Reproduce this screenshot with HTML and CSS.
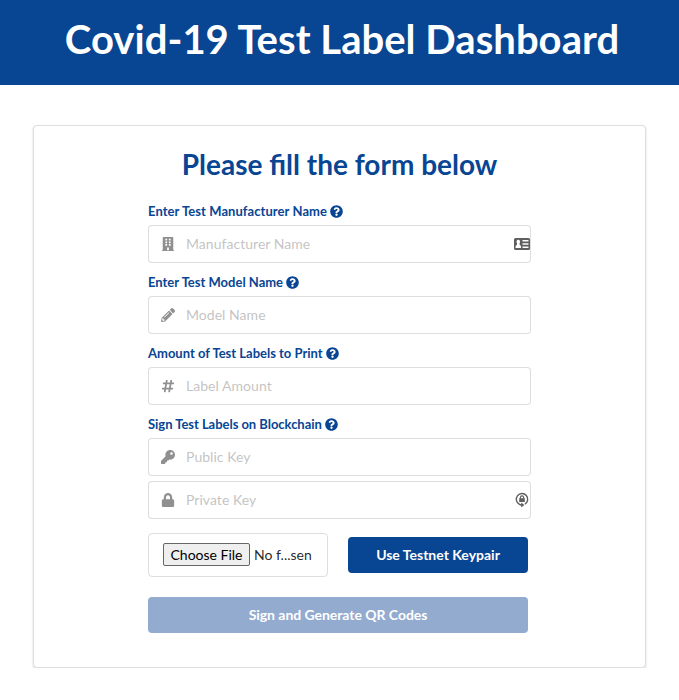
FILE: index.html
```html
<!DOCTYPE html>
<html lang="en">
<head>
<meta charset="utf-8">
<title>Covid-19 Test Label Dashboard</title>
<link rel="stylesheet" href="styles.css">
</head>
<body>
<svg class="sprite" width="0" height="0">
  <symbol id="help" viewBox="0 0 512 512"><path d="M504 256c0 136.997-111.043 248-248 248S8 392.997 8 256C8 119.083 119.043 8 256 8s248 111.083 248 248zM262.655 90c-54.497 0-89.255 22.957-116.549 63.758-3.536 5.286-2.353 12.415 2.715 16.258l34.699 26.31c5.205 3.947 12.621 3.008 16.665-2.122 17.864-22.658 30.113-35.797 57.303-35.797 20.429 0 45.698 13.148 45.698 32.958 0 14.976-12.363 22.667-32.534 33.976C247.128 238.528 216 254.941 216 296v4c0 6.627 5.373 12 12 12h56c6.627 0 12-5.373 12-12v-1.333c0-28.462 83.186-29.647 83.186-106.667 0-58.002-60.165-102-116.531-102zM256 338c-25.365 0-46 20.635-46 46 0 25.364 20.635 46 46 46s46-20.636 46-46c0-25.365-20.635-46-46-46z"/></symbol>
</svg>
<header class="banner"><h1>Covid-19 Test Label Dashboard</h1></header>
<main class="card">
  <h2>Please fill the form below</h2>
  <form class="form">
    <div class="field">
      <label class="maker" for="maker"><span>Enter Test Manufacturer Name</span> <svg class="help"><use href="#help"/></svg></label>
      <div class="input">
        <svg class="icon" viewBox="0 0 448 512"><path fill-rule="evenodd" d="M436 480h-20V24c0-13.255-10.745-24-24-24H56C42.745 0 32 10.745 32 24v456H12c-6.627 0-12 5.373-12 12v20h448v-20c0-6.627-5.373-12-12-12zM128 64h64v64h-64zM256 64h64v64h-64zM128 160h64v64h-64zM256 160h64v64h-64zM128 256h64v64h-64zM256 256h64v64h-64zM192 384h64v96h-64z"/></svg>
        <input id="maker" type="text" placeholder="Manufacturer Name">
        <svg class="autofill contact" viewBox="0 0 16 12"><path fill-rule="evenodd" d="M1.5 0h13A1.500 1.500 0 0 1 16 1.500v9a1.500 1.500 0 0 1-1.500 1.500h-13A1.500 1.500 0 0 1 0 10.500v-9A1.500 1.500 0 0 1 1.500 0zM4.300 1.800a1.800 1.900 0 0 0-1.300 3.200v1.700C1.900 7.100 1.500 8 1.500 10h5.600c0-2-.4-2.900-1.500-3.300V5A1.800 1.900 0 0 0 4.300 1.800zM8.500 2h6v1.500h-6zM8.500 5.200h6v1.500h-6zM8.500 8.400h6v1.500h-6z"/></svg>
      </div>
    </div>
    <div class="field">
      <label for="model"><span>Enter Test Model Name</span> <svg class="help"><use href="#help"/></svg></label>
      <div class="input">
        <svg class="icon" viewBox="0 0 512 512"><path d="M497.9 142.1l-46.1 46.1c-4.7 4.7-12.3 4.7-17 0l-111-111c-4.7-4.7-4.7-12.3 0-17l46.1-46.1c18.7-18.7 49.1-18.7 67.9 0l60.1 60.1c18.8 18.7 18.8 49.1 0 67.9zM284.2 99.8L21.6 362.4.4 483.9c-2.900 16.400 11.400 30.600 27.800 27.800l121.500-21.300 262.600-262.600c4.700-4.700 4.700-12.300 0-17l-111-111c-4.800-4.700-12.400-4.700-17.100 0zM124.100 339.900c-5.500-5.500-5.500-14.300 0-19.800l154-154c5.500-5.500 14.300-5.500 19.800 0s5.500 14.300 0 19.800l-154 154c-5.500 5.500-14.300 5.500-19.800 0zM88 424h48v36.300l-64.500 11.300-31.100-31.100L51.700 376H88v48z"/></svg>
        <input id="model" type="text" placeholder="Model Name">
      </div>
    </div>
    <div class="field">
      <label for="amount"><span>Amount of Test Labels to Print</span> <svg class="help"><use href="#help"/></svg></label>
      <div class="input">
        <svg class="icon" viewBox="0 0 448 512"><path d="M440.667 182.109l7.143-40c1.313-7.355-4.342-14.109-11.813-14.109h-74.81l14.623-81.891C377.123 38.754 371.468 32 363.997 32h-40.632a12 12 0 0 0-11.813 9.891L296.175 128H197.54l14.623-81.891C213.477 38.754 207.822 32 200.35 32h-40.632a12 12 0 0 0-11.813 9.891L132.528 128H53.432a12 12 0 0 0-11.813 9.891l-7.143 40C33.163 185.246 38.818 192 46.289 192h74.81L98.242 320H19.146a12 12 0 0 0-11.813 9.891l-7.143 40C-1.123 377.246 4.532 384 12.003 384h74.81L72.19 465.891C70.877 473.246 76.532 480 84.003 480h40.632a12 12 0 0 0 11.813-9.891L151.826 384h98.634l-14.623 81.891C234.523 473.246 240.178 480 247.65 480h40.632a12 12 0 0 0 11.813-9.891L315.472 384h79.096a12 12 0 0 0 11.813-9.891l7.143-40c1.313-7.355-4.342-14.109-11.813-14.109h-74.81l22.857-128h79.096a12 12 0 0 0 11.813-9.891zM261.889 320h-98.634l22.857-128h98.634l-22.857 128z"/></svg>
        <input id="amount" type="text" placeholder="Label Amount">
      </div>
    </div>
    <div class="field">
      <label class="sign" for="public"><span>Sign Test Labels on Blockchain</span> <svg class="help"><use href="#help"/></svg></label>
      <div class="input">
        <svg class="icon" viewBox="0 0 512 512"><path d="M512 176.001C512 273.203 433.202 352 336 352c-11.22 0-22.19-1.062-32.827-3.069l-24.012 27.014A23.999 23.999 0 0 1 261.223 384H224v40c0 13.255-10.745 24-24 24h-40v40c0 13.255-10.745 24-24 24H24c-13.255 0-24-10.745-24-24v-78.059c0-6.365 2.529-12.47 7.029-16.971l161.802-161.802C163.108 213.814 160 195.271 160 176 160 78.798 238.797.001 335.999 0 433.488-.001 512 78.511 512 176.001zM336 128c0 26.510 21.490 48 48 48s48-21.490 48-48-21.490-48-48-48-48 21.490-48 48z"/></svg>
        <input id="public" type="text" placeholder="Public Key">
      </div>
      <div class="input">
        <svg class="icon" viewBox="0 0 448 512"><path d="M400 224h-24v-72C376 68.200 307.800 0 224 0S72 68.200 72 152v72H48c-26.500 0-48 21.500-48 48v192c0 26.500 21.500 48 48 48h352c26.500 0 48-21.500 48-48V272c0-26.500-21.500-48-48-48zm-104 0H152v-72c0-39.700 32.300-72 72-72s72 32.300 72 72v72z"/></svg>
        <input id="private" type="text" placeholder="Private Key">
        <svg class="autofill password" viewBox="0 0 14 16"><path class="ring" d="M4.300 12.200A5.700 5.700 0 1 1 9.900 12.100M3.900 12Q5 13 7 13"/><path d="M6.200 10.600v4.800L9.400 13zM4.200 6.200h.6V5.500a2.200 2.200 0 0 1 4.400 0v.7h.6v3.900H4.200zM5.900 6.200h2.200V5.500a1.100 1.100 0 0 0-2.200 0z"/></svg>
      </div>
    </div>
    <div class="actions">
      <div class="file"><button type="button" class="choose">Choose File</button><span class="filename">No f...sen</span></div>
      <button type="button" class="btn">Use Testnet Keypair</button>
    </div>
    <button type="submit" class="btn submit" disabled>Sign and Generate QR Codes</button>
  </form>
</main>
</body>
</html>
```
FILE: styles.css
```css
* { box-sizing: border-box; }
body { margin: 0; background: #fff; font: 14px/20px Lato, "Liberation Sans", sans-serif; color: rgba(0,0,0,.87); }
h1, h2 { margin: 0; font-weight: 700; text-align: center; }
.sprite { display: block; }
.banner { height: 85px; padding-top: 14px; background: #084593; color: #fff; }
h1 { font-size: 40px; line-height: 51px; padding-left: 5px; letter-spacing: .04px; }
.card { width: 613px; height: 543px; margin: 40px 33px 0; padding: 20px 114px 0; border: 1px solid rgba(34,36,38,.15); border-radius: 4px; box-shadow: 0 1px 2px rgba(34,36,38,.2); }
h2 { color: #084593; font-size: 28px; line-height: 36px; }
.form { width: 383px; margin-top: 19px; }
.field { margin-bottom: 9px; }
.field label { display: flex; align-items: center; gap: 3px; height: 20px; margin-bottom: 4px; color: #084593; font-size: 13px; font-weight: 700; white-space: nowrap; }
.field .maker { letter-spacing: .065px; }
.field .sign { letter-spacing: -.035px; }
.help { width: 13px; height: 13px; fill: currentColor; }
.input { position: relative; height: 38px; }
.input + .input { margin-top: 5px; }
.input input { width: 100%; height: 38px; padding: 0 37px 2px; border: 1px solid rgba(34,36,38,.15); border-radius: 4px; background: #fff; color: rgba(0,0,0,.87); font: 14px/17px Lato, "Liberation Sans", sans-serif; letter-spacing: .04px; outline: none; }
.input input::placeholder { color: rgba(191,191,191,.95); opacity: 1; }
.icon { position: absolute; left: 13px; top: 12px; width: 14px; height: 14px; fill: #909090; pointer-events: none; }
.autofill { position: absolute; fill: #5f5f5f; pointer-events: none; }
.contact { width: 16px; height: 12px; right: 1px; top: 13px; }
.password { width: 14px; height: 16px; right: 2px; top: 11px; }
.ring { fill: none; stroke: #5f5f5f; stroke-width: 1.4; }
.actions { display: flex; align-items: center; gap: 20px; width: 380px; margin-top: 14px; }
.file { display: flex; align-items: center; gap: 4px; width: 180px; height: 44px; padding: 0 14px 2px; border: 1px solid rgba(34,36,38,.15); border-radius: 4px; white-space: nowrap; }
.filename { padding-top: 2px; }
.choose { width: 87px; height: 23px; padding: 0; border: 1px solid #666; border-radius: 2px; background: #efefef; color: #000; font: 14px/17px Lato, "Liberation Sans", sans-serif; }
.btn { width: 180px; height: 36px; padding: 0; border: 0; border-radius: 4px; background: #084593; color: #fff; font: 700 14px/14px Lato, "Liberation Sans", sans-serif; }
.submit { display: block; width: 380px; margin-top: 20px; letter-spacing: -.04px; background: #93abcf; }
```
